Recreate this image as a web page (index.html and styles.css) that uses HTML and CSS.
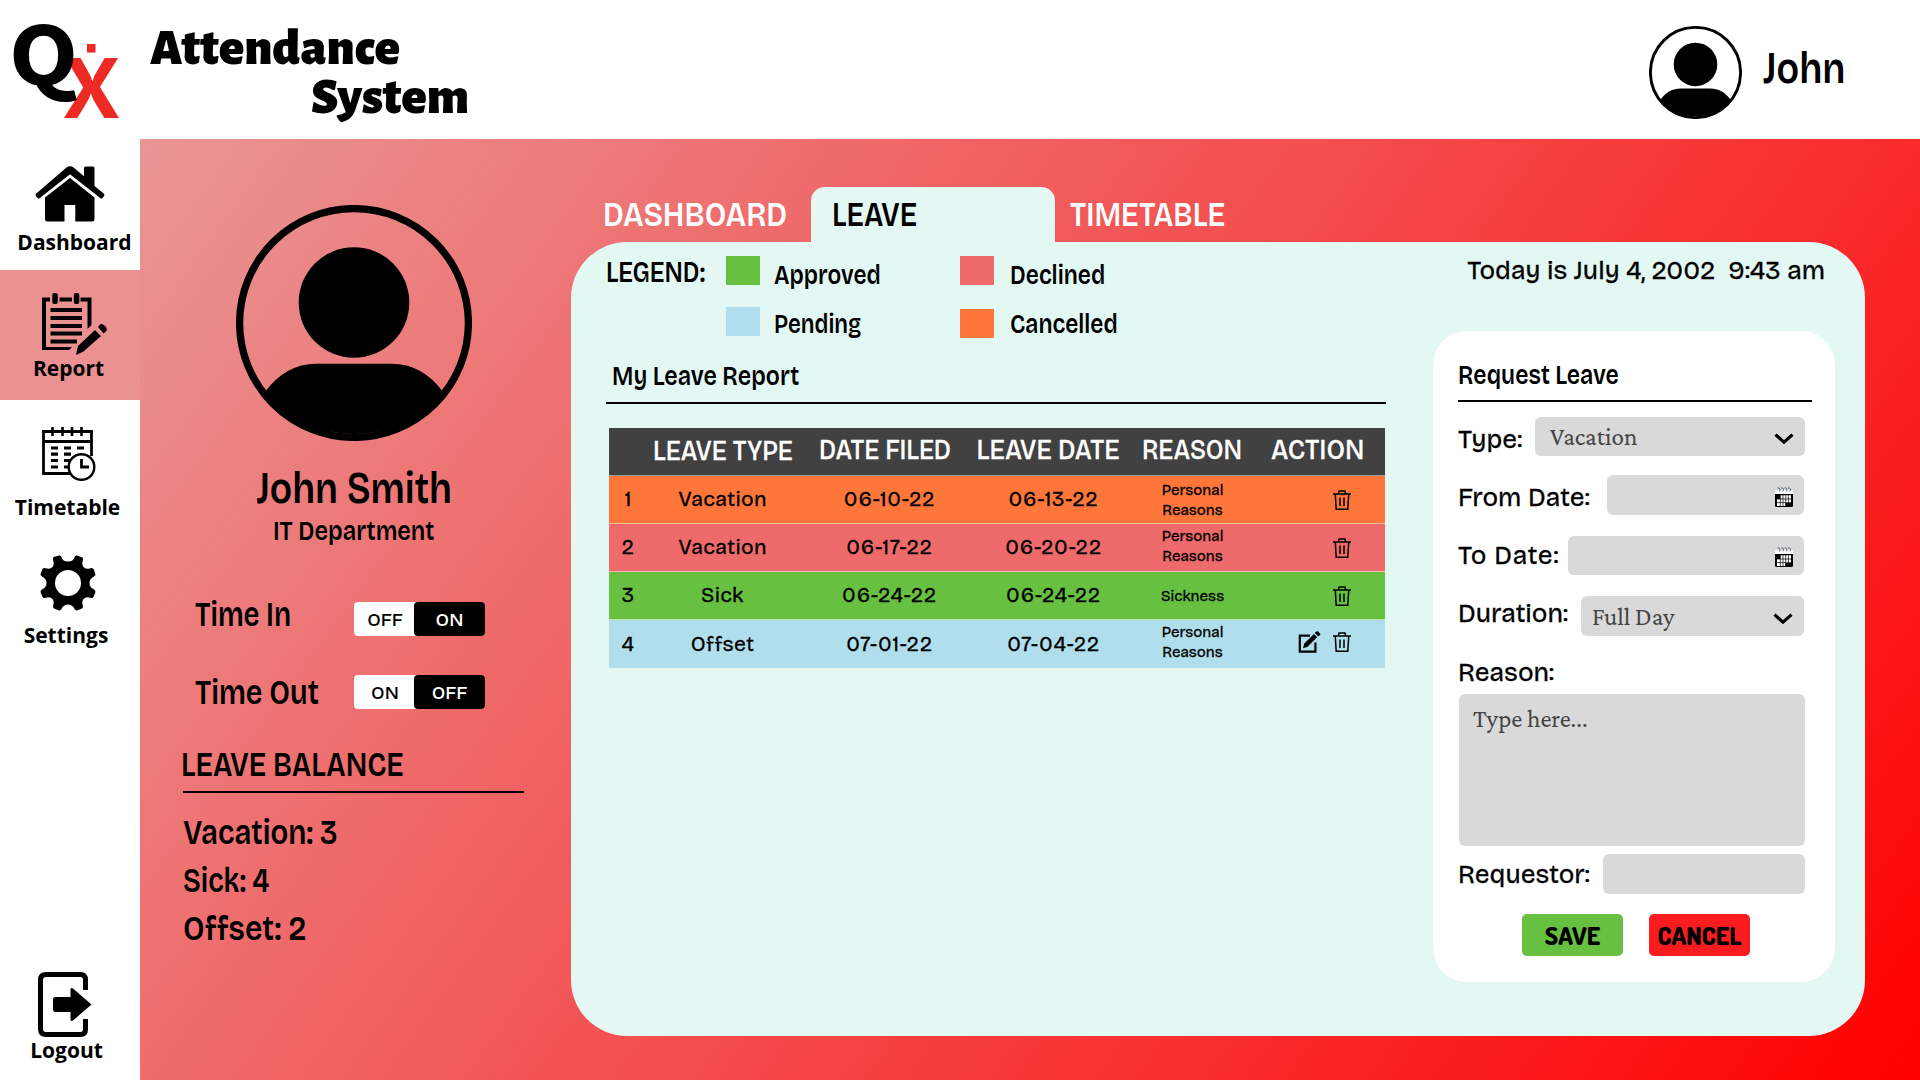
FILE: index.html
```html
<!DOCTYPE html>
<html lang="en">
<head>
<meta charset="utf-8">
<title>Attendance System</title>
<link rel="stylesheet" href="styles.css">
</head>
<body>
<svg class="defs" aria-hidden="true">
  <symbol id="person" viewBox="0 0 236 236">
    <circle cx="118" cy="118" r="114.4" fill="none" stroke="#000" stroke-width="7.3"/>
    <circle cx="118" cy="97.5" r="55.3"/>
    <path d="M29 187C43 168 60 158.8 80 158.8H156C176 158.8 193 168 207 187A115 115 0 0 1 29 187Z"/>
  </symbol>
  <symbol id="trash" viewBox="0 0 18 20">
    <g fill="none" stroke="#000" stroke-width="1.5">
      <path d="M0 4H18M2.3 4.5L3.2 19.2H14.8L15.7 4.5M5.4 4L6 .9H12L12.6 4M7 7.5V16M11 7.5V16"/>
    </g>
  </symbol>
  <symbol id="edit" viewBox="0 0 23 22">
    <path d="M12 4.6H1.8V20.6H17.4V11.5" fill="none" stroke="#000" stroke-width="2.2"/>
    <path d="M5 17.2L6.3 12.6L16 2.9L19.2 6.1L9.6 15.7ZM16.9 2L18.4 .5Q19.3-.2 20.2.6L22 2.4Q22.8 3.3 22 4.2L20.2 5.3Z"/>
  </symbol>
  <symbol id="chevron" viewBox="0 0 20 12">
    <path d="M1.5 1.6L10 9.2L18.5 1.6" fill="none" stroke="#000" stroke-width="3.2"/>
  </symbol>
  <symbol id="calendar" viewBox="0 0 18 20">
    <path d="M0 7V4.5Q0 3 2 3H16Q18 3 18 4.500V7Z" fill="#fff"/>
    <path d="M2.5 1Q4.5.2 5 2.2T4 4M6 1Q8 .2 8.5 2.2T7.5 4M9.5 1Q11.5 .2 12 2.2T11 4M13 1Q15 .2 15.5 2.2T14.5 4" fill="none" stroke="#5b6a76" stroke-width="1"/>
    <path d="M0 7H18V18.5Q18 20 16.5 20H1.5Q0 20 0 18.5Z"/>
    <path d="M5.3 8.3H16V16H10.5V19H2V12H5.3Z" fill="#fff"/>
    <path d="M5.3 8V19M8 8V19M10.7 8V19M13.4 8V16M2 12H16M2 15.6H16" stroke="#000" stroke-width=".7"/>
  </symbol>
</svg>

<header class="topbar">
  <svg class="logo" viewBox="0 0 120 130" width="120" height="130">
    <text class="logo-x" x="63" y="118" textLength="57" lengthAdjust="spacingAndGlyphs">X</text>
    <text class="logo-q" x="9" y="85" textLength="69" lengthAdjust="spacingAndGlyphs">Q</text>
    <rect x="87" y="44" width="8.5" height="8.5" fill="#ee2a24"/>
  </svg>
  <h1 class="brand"><span>Attendance</span><span class="brand-second">System</span></h1>
  <div class="account">
    <svg width="93" height="93"><use href="#person"/></svg>
    <span class="cond account-name">John</span>
  </div>
</header>

<div class="shell">
  <nav class="sidebar">
    <a class="nav nav-dashboard">
      <svg width="70" height="56" viewBox="0 0 70 56">
        <path d="M31.5 1.5Q35-1 38.5 1.5L49 10.2V2Q49 .5 50.5 .5H58Q59.5 .5 59.5 2V20L69 27.8Q70 28.8 69 30L67.5 32Q66.5 33 65.2 32L35 8.2L4.8 32Q3.5 33 2.5 32L1 30Q0 28.8 1 27.8Z"/>
        <path d="M35 12L59.5 31.5V53Q59.5 55.5 57 55.5H40.3V39H29.5V55.5H12.5Q10 55.5 10 53V31.5Z"/>
      </svg>
      <span>Dashboard</span>
    </a>
    <a class="nav nav-report">
      <svg width="66" height="62" viewBox="0 0 66 62">
        <path d="M9 4.500H1V57H28L31 54H5V8.500H9ZM18.500 4.500H31V8.500H18.500ZM39.500 4.500H50.500V32L46.500 36V8.500H39.500Z"/>
        <rect x="11.300" y="0" width="5.500" height="11" rx="2"/><rect x="32.800" y="0" width="5.500" height="11" rx="2"/>
        <path d="M9.500 17H41M9.500 25H41M9.500 33H41M9.500 40.500H41M9.500 48.500H36" stroke="#000" stroke-width="4"/>
        <path d="M35 62L37 53L54 37L60 43L42.500 58.500ZM57 34L59 31.500Q61 30 64 33T65 38.500L62.500 40.500Z"/>
      </svg>
      <span>Report</span>
    </a>
    <a class="nav nav-timetable">
      <svg width="54" height="54" viewBox="0 0 54 54">
        <g fill="none" stroke="#000" stroke-width="2.8">
          <path d="M28 46.5H1.5V4.5H49.5V29M1.5 14.5H49.5"/>
          <path d="M10.5 0V9M20.5 0V9M30 0V9M39.5 0V9" stroke-width="2.6"/>
          <path d="M9 21H16M22 21H29M35 21H42M9 27.2H16M22 27.2H29M9 33.5H16M22 33.5H28M9 40H16M22 40H26" stroke-width="3.2"/>
          <circle cx="39.5" cy="40" r="12.8" fill="#fff" stroke-width="2.4"/>
          <path d="M39.5 32V40H47"/>
        </g>
      </svg>
      <span>Timetable</span>
    </a>
    <a class="nav nav-settings">
      <svg width="56" height="56" viewBox="-28 -28 56 56">
        <path d="M-14.5 -26L-9 -27.5Q-7 -28 -6.5 -26Q-5.5 -21.5 0 -21.5T6.5 -26Q7 -28 9 -27.5L14.5 -25.5Q15.5 -24.5 14.8 -22.5Q13.5 -17.5 16 -15.5T22.5 -14.8Q24.5 -15.5 25.5 -14L27.3 -9.5Q28 -7.5 26 -6.5Q21.5 -4.5 21.5 0T26 6.5Q28 7.5 27.3 9.5L25.5 14Q24.5 15.5 22.5 14.8Q17.5 13.5 15.5 16T14.8 22.5Q15.5 24.5 14 25.5L9.5 27.3Q7.5 28 6.5 26Q4.5 21.5 0 21.5T-6.5 26Q-7.5 28 -9.5 27.3L-14 25.5Q-15.5 24.5 -14.8 22.5Q-13.5 17.5 -16 15.5T-22.5 14.8Q-24.5 15.5 -25.5 14L-27.3 9.5Q-28 7.5 -26 6.5Q-21.5 4.5 -21.5 0T-26 -6.5Q-28 -7.5 -27.3 -9.5L-25.5 -14Q-24.5 -15.5 -22.5 -14.8Q-17.5 -13.5 -15.5 -16T-14.8 -22.5Q-15.5 -25 -14.5 -26Z"/>
        <circle r="13" fill="#fff"/>
      </svg>
      <span>Settings</span>
    </a>
    <a class="nav nav-logout">
      <svg width="54" height="65" viewBox="0 0 54 65">
        <path d="M47.5 18V8Q47.5 2.5 42.5 2.5H8Q2.5 2.5 2.5 8V57Q2.5 62.5 8 62.5H42.5Q47.5 62.5 47.5 57V47" fill="none" stroke="#000" stroke-width="5"/>
        <path d="M17.5 25H32.5V17Q33 15.5 35 16.5L53.5 32.5L35 48.5Q33 49.5 32.5 48V40H17.5Q15 40 15 37.5V27.5Q15 25 17.5 25Z"/>
      </svg>
      <span>Logout</span>
    </a>
  </nav>

  <main class="stage">
    <section class="profile">
      <svg class="avatar" width="236" height="236"><use href="#person"/></svg>
      <h2 class="cond full-name">John Smith</h2>
      <p class="cond department">IT Department</p>
      <div class="clock clock-in"><span class="cond clock-label">Time In</span>
        <div class="switch"><span>OFF</span><span class="on">ON</span></div></div>
      <div class="clock clock-out"><span class="cond clock-label">Time Out</span>
        <div class="switch"><span>ON</span><span class="on">OFF</span></div></div>
      <div class="balance">
        <h3 class="cond">LEAVE BALANCE</h3>
        <ul>
          <li><span class="cond days-vacation">Vacation: 3</span></li>
          <li><span class="cond days-sick">Sick: 4</span></li>
          <li><span class="cond days-offset">Offset: 2</span></li>
        </ul>
      </div>
    </section>

    <section class="workspace">
      <div class="tabs">
        <a class="tab tab-dashboard"><span class="cond">DASHBOARD</span></a>
        <a class="tab tab-leave"><span class="cond">LEAVE</span></a>
        <a class="tab tab-timetable"><span class="cond">TIMETABLE</span></a>
      </div>
      <div class="panel">
        <div class="report">
          <div class="legend">
            <span class="cond legend-title">LEGEND:</span>
            <i class="swatch approved"></i><span class="cond">Approved</span>
            <i class="swatch declined"></i><span class="cond">Declined</span>
            <span></span>
            <i class="swatch pending"></i><span class="cond legend-pending">Pending</span>
            <i class="swatch cancelled"></i><span class="cond">Cancelled</span>
          </div>
          <h3 class="report-title"><span class="cond">My Leave Report</span></h3>
          <div class="table">
            <div class="row head"><span></span><b class="first">LEAVE TYPE</b><b>DATE FILED</b><b class="wide">LEAVE DATE</b><b>REASON</b><b class="last">ACTION</b></div>
            <div class="row cancelled"><span class="num">1</span><span class="kind">Vacation</span><span class="filed">06-10-22</span><span class="leave">06-13-22</span><span class="why">Personal<br>Reasons</span><span class="act"><svg width="18" height="20"><use href="#trash"/></svg></span></div>
            <div class="row declined"><span class="num">2</span><span class="kind">Vacation</span><span class="filed">06-17-22</span><span class="leave">06-20-22</span><span class="why up">Personal<br>Reasons</span><span class="act"><svg width="18" height="20"><use href="#trash"/></svg></span></div>
            <div class="row approved"><span class="num">3</span><span class="kind">Sick</span><span class="filed">06-24-22</span><span class="leave">06-24-22</span><span class="why">Sickness</span><span class="act"><svg width="18" height="20"><use href="#trash"/></svg></span></div>
            <div class="row pending"><span class="num">4</span><span class="kind">Offset</span><span class="filed">07-01-22</span><span class="leave">07-04-22</span><span class="why up">Personal<br>Reasons</span><span class="act up"><svg width="23" height="22"><use href="#edit"/></svg><svg width="18" height="20"><use href="#trash"/></svg></span></div>
          </div>
        </div>

        <aside class="side">
          <p class="today">Today is July 4, 2002&nbsp; 9:43 am</p>
          <form class="card">
            <h3><span class="cond">Request Leave</span></h3>
            <div class="field f-type"><label>Type:</label><div class="input">Vacation<svg width="20" height="12"><use href="#chevron"/></svg></div></div>
            <div class="field f-from"><label>From Date:</label><div class="input"><svg width="18" height="20"><use href="#calendar"/></svg></div></div>
            <div class="field f-to"><label>To Date:</label><div class="input"><svg width="18" height="20"><use href="#calendar"/></svg></div></div>
            <div class="field f-duration"><label>Duration:</label><div class="input">Full Day<svg width="20" height="12"><use href="#chevron"/></svg></div></div>
            <label class="reason-label">Reason:</label>
            <div class="reason-box">Type here...</div>
            <div class="field f-requestor"><label>Requestor:</label><div class="input"></div></div>
            <div class="buttons"><span class="btn save">SAVE</span><span class="btn cancel">CANCEL</span></div>
          </form>
        </aside>
      </div>
    </section>
  </main>
</div>
</body>
</html>
```
FILE: styles.css
```css
*{box-sizing:border-box;margin:0;padding:0}
body{width:1920px;height:1080px;overflow:hidden;background:#fff;color:#000;font-family:"Bricolage Grotesque","Inter",sans-serif;font-weight:400}
.defs{display:none}
svg{display:block;flex:none;overflow:visible}
ul{list-style:none}
h1,h2,h3,b{font-weight:500}

/* Condensed cut of the interface face; --sx sets how narrow it is */
.cond{--sx:.81;display:inline-block;white-space:nowrap;font-weight:600;transform:scaleX(var(--sx));transform-origin:left center}

.topbar{display:flex;height:139px;background:#fff}
.logo{flex:none}
.logo-x{font:700 86px "PT Sans","Open Sans",sans-serif;fill:#ee2a24}
.logo-q{font:700 93px "Source Sans 3","Open Sans",sans-serif;fill:#000}
.brand{display:flex;flex-direction:column;margin:24px 0 0 30px;width:340px;font:900 52px/49px "Alegreya Sans","Lato",sans-serif}
.brand-second{padding-left:161px}
.account{display:flex;margin:26px 76px 0 auto}
.account-name{--sx:.83;margin:15px 0 0 21px;width:81px;font-size:45px;line-height:54px}

.shell{display:flex;height:941px}
.sidebar{display:flex;flex-direction:column;width:140px;background:#fff}
.nav{display:flex;flex-direction:column;align-items:center;height:130px;font:700 21px/29px "Open Sans",sans-serif}
.nav-dashboard{height:131px;padding-top:27px}
.nav-dashboard span{margin:6px 0 0 9px}
.nav-report{padding-top:23px;background:#eb9191}
.nav-report svg{margin-left:8px}
.nav-report span{margin:-1px 3px 0 0}
.nav-timetable{padding-top:27px}
.nav-timetable svg{margin-right:3px}
.nav-timetable span{margin:12px 5px 0 0}
.nav-settings{padding-top:25px}
.nav-settings svg{margin-right:5px}
.nav-settings span{margin:10px 8px 0 0}
.nav-logout{height:108px;margin-top:auto}
.nav-logout svg{margin-right:10px}
.nav-logout span{margin:-1px 7px 0 0}

.stage{display:flex;width:1780px;background:linear-gradient(126deg,#e99696,#f00)}
.profile{display:flex;flex-direction:column;width:431px;padding-top:66px}
.avatar{margin-left:96px}
.full-name,.department{--sx:.82;align-self:center;margin-right:3px;transform-origin:center}
.full-name{margin-top:20px;font-size:45px;line-height:54px}
.department{--sx:.835;margin-top:-1px;font-size:28px;line-height:34px}
.clock{display:flex;align-items:center;justify-content:space-between;height:34px;padding:0 86px 0 55px;font-size:35px}
.clock-in{margin-top:54px}
.clock-out{margin-top:39px}
.clock-in .clock-label{--sx:.79;padding-bottom:10px}
.clock-out .clock-label{--sx:.825}
.switch{display:flex;width:131px;height:34px;border-radius:4px;background:#fff;font-size:19px;font-weight:500}
.switch span{display:flex;align-items:center;justify-content:center;width:62px}
.switch .on{width:71px;margin-left:-2px;border-radius:4px;background:#000;color:#fff}
.balance{margin:34px 47px 0 43px;font-size:35px}
.balance h3{margin-left:-2px;font-size:35px;line-height:42px}
.balance ul{margin-top:6px;padding-top:15px;border-top:2px solid #000}
.balance li{height:48px;line-height:48px}
.days-vacation{--sx:.835}
.days-sick{--sx:.785}
.days-offset{--sx:.86}

.workspace{padding-top:48px}
.tabs{display:flex;height:55px;color:#fff;font-size:35px;line-height:42px}
.tab{padding-top:6px}
.tab-dashboard{width:240px;padding-left:32px}
.tab-dashboard .cond{--sx:.86}
.tab-leave{width:244px;padding-left:21px;border-radius:14px 14px 0 0;background:#e3f8f3;color:#000}
.tab-timetable{padding-left:15px}
.tab-timetable .cond{--sx:.825}
.panel{display:flex;width:1294px;height:794px;border-radius:56px;background:#e3f8f3}
.report{width:780px;margin-left:35px}
.legend{display:grid;grid-template-columns:120px 48px 186px 50px 200px;grid-template-rows:36px 36px;row-gap:13px;padding-top:15px;font-size:28px;line-height:36px}
.legend .cond{justify-self:start}
.legend-title{--sx:.83;margin-top:-2px;font-size:29px}
.legend-pending{--sx:.79}
.swatch{width:34px;height:29px;margin-top:-1px}
.swatch.pending{margin-top:1px}
.swatch.cancelled{margin-top:3px}
.approved{background:#67c040}
.declined{background:#ef6a6b}
.pending{background:#b1deec}
.cancelled{background:#ff763b}
.report-title{height:46px;margin-top:16px;padding-left:6px;border-bottom:2px solid #000;font-size:28px;line-height:36px}
.report-title .cond{--sx:.828}
.table{width:776px;margin:24px 0 0 3px;font-size:21px}
.row{display:grid;grid-template-columns:38px 151px 174px 150px 140px 123px;align-items:center;height:48px;border-bottom:1px solid #ffffff80;text-align:center;-webkit-text-stroke:.3px}
.row:last-child{border:0}
.num,.kind,.filed,.leave{padding-bottom:1px;letter-spacing:.3px}
.filed,.leave{letter-spacing:.8px}
.head{background:#414141;color:#fff;font-size:27px}
.head b{padding-bottom:4px;white-space:nowrap;transform:scaleX(.92)}
.head .first{padding-bottom:2px}
.head .wide{transform:scaleX(.94)}
.head .last{padding-right:12px;transform:scaleX(.96)}
.filed{padding-left:9px}
.leave{padding-left:13px}
.why{padding-left:1px;font-size:15px;line-height:20px}
.why.up,.act.up{padding-bottom:4px}
.act{display:flex;align-items:center;justify-content:flex-end;gap:12px;padding-right:34px}

.side{width:402px;margin-left:47px}
.today{height:89px;padding:14px 10px 0 0;text-align:right;white-space:nowrap;font-size:26px;line-height:30px;-webkit-text-stroke:.3px}
.card{display:flex;flex-direction:column;height:651px;padding:26px 30px 0 26px;border-radius:34px;background:#fff;font-size:26px}
.card h3{height:45px;margin:0 -7px 0 -1px;border-bottom:2px solid #000;font-size:28px;line-height:37px}
.card h3 .cond{--sx:.82}
.field{display:flex;align-items:center;justify-content:space-between;height:39px;margin-top:19px}
.field label,.reason-label{margin-left:-1px;white-space:nowrap;-webkit-text-stroke:.3px}
.input{display:flex;align-items:center;justify-content:space-between;height:100%;padding:0 11px 0 15px;border-radius:6px;background:#d9d9d9;color:#444;font:400 25px "Crimson Pro","Crimson Text",serif}
.input svg:only-child{margin-left:auto;margin-top:3px}
.f-type{margin-top:15px}
.f-type .input{width:270px}
.f-type .input svg,.f-duration .input svg{margin-top:5px}
.f-type label{padding-top:6px}
.f-from{height:40px;padding-right:1px}
.f-from .input{width:197px}
.f-from label{padding-top:5px}
.f-to{margin-top:21px;padding-right:1px}
.f-to .input{width:236px}
.f-to label{letter-spacing:.6px}
.f-duration{height:40px;margin-top:21px;padding-right:1px}
.f-duration .input{width:223px;padding-left:11px}
.f-duration label{padding-bottom:6px}
.reason-label{margin-top:22px;line-height:30px}
.reason-box{height:152px;margin-top:6px;padding:9px 14px;border-radius:6px;background:#d9d9d9;color:#444;font:400 25px/32px "Crimson Pro","Crimson Text",serif}
.f-requestor{height:40px;margin-top:8px}
.f-requestor .input{width:202px}
.f-requestor label{padding-top:1px}
.buttons{display:flex;gap:26px;margin:20px 0 0 63px}
.btn{width:101px;height:42px;border-radius:5px;text-align:center;font:800 25px/43px "Dosis","Open Sans",sans-serif}
.save{background:#67c040}
.cancel{background:#fb1c1f}
```
